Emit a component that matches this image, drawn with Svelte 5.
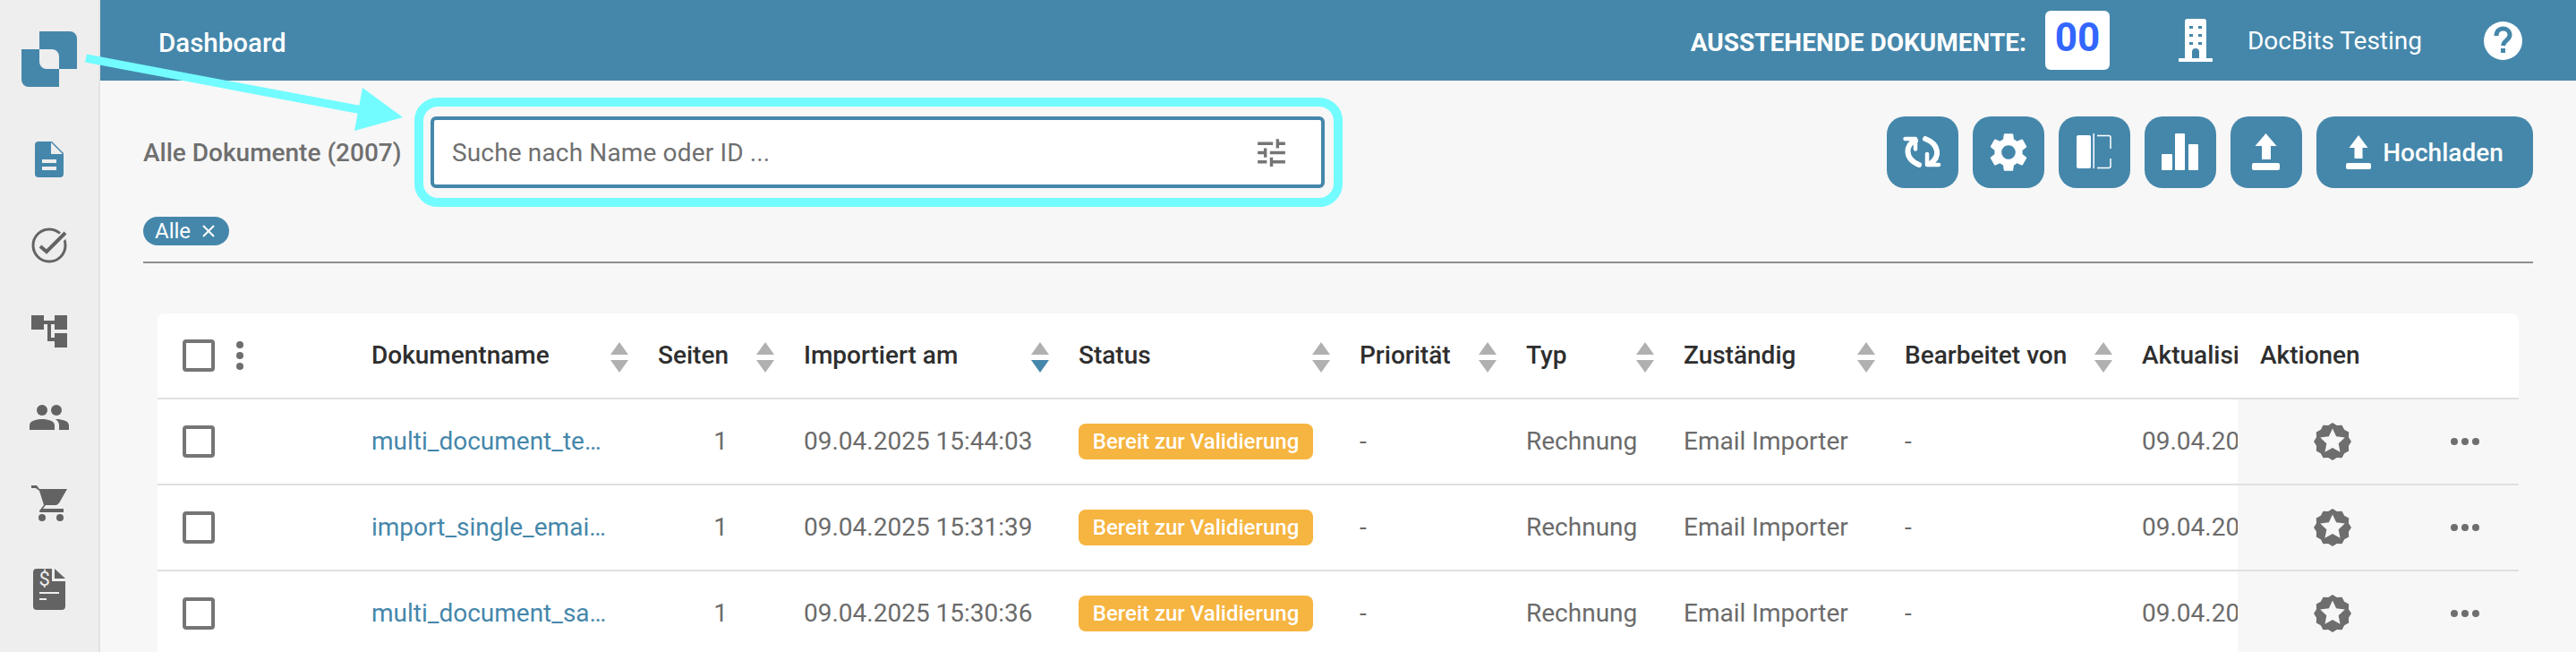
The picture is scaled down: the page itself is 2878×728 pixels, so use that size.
<script>
  const rows = [
    { name: 'multi_document_te…', date: '09.04.2025 15:44:03' },
    { name: 'import_single_emai…', date: '09.04.2025 15:31:39' },
    { name: 'multi_document_sa…', date: '09.04.2025 15:30:36' }
  ];

  const columns = [
    { label: 'Dokumentname' },
    { label: 'Seiten' },
    { label: 'Importiert am', active: true },
    { label: 'Status' },
    { label: 'Priorität' },
    { label: 'Typ' },
    { label: 'Zuständig' },
    { label: 'Bearbeitet von' }
  ];

  // scalloped badge with a star cut out of it
  function badgePath() {
    let d = '';
    for (let i = 0; i < 24; i++) {
      const r = i % 2 ? 18.6 : 21;
      const a = (i * Math.PI) / 12 - Math.PI / 2;
      d += `${i ? 'L' : 'M'}${(21 + r * Math.cos(a)).toFixed(2)} ${(21 + r * Math.sin(a)).toFixed(2)}`;
    }
    d += 'Z';
    for (let i = 0; i < 10; i++) {
      const r = i % 2 ? 7 : 14.5;
      const a = (i * Math.PI) / 5 - Math.PI / 2;
      d += `${i ? 'L' : 'M'}${(21 + r * Math.cos(a)).toFixed(2)} ${(21 + r * Math.sin(a)).toFixed(2)}`;
    }
    return d + 'Z';
  }
  const badge = badgePath();
</script>

<div class="page">
  <aside class="sidebar">
    <div class="logo">
      <svg width="62" height="62" viewBox="0 0 62 62">
        <path class="blue" d="M20 0H54a8 8 0 0 1 8 8V42H42V28a8 8 0 0 0-8-8H20Z" />
        <path class="blue" d="M0 20H20V34a8 8 0 0 0 8 8H42V62H8a8 8 0 0 1-8-8Z" />
      </svg>
    </div>
    <div class="nav-item">
      <svg width="32" height="40" viewBox="0 0 32 40">
        <path class="blue" d="M4 0H19L32 13V36a4 4 0 0 1-4 4H4a4 4 0 0 1-4-4V4a4 4 0 0 1 4-4Z" />
        <path class="cut" d="M18 1V14H31ZM8 20H24V24H8ZM8 28H24V32H8Z" />
      </svg>
    </div>
    <div class="nav-item">
      <svg width="40" height="40" viewBox="0 0 40 40" fill="none">
        <circle cx="20" cy="20" r="18" stroke="#636363" stroke-width="3" />
        <path d="M11 21L17 27L39 6" stroke="#eeeeee" stroke-width="9" />
        <path d="M10 21L17 27L38 6" stroke="#636363" stroke-width="4" />
      </svg>
    </div>
    <div class="nav-item">
      <svg width="40" height="36" viewBox="0 0 40 36">
        <path class="grey" d="M0 0H14V16H0ZM26 0H40V16H26ZM26 20H40V36H26Z" />
        <path class="grey" d="M14 6H26V10H22V25H26V29H18V10H14Z" />
      </svg>
    </div>
    <div class="nav-item">
      <svg width="44" height="28" viewBox="0 0 44 28">
        <circle class="grey" cx="14" cy="6" r="6" />
        <circle class="grey" cx="30" cy="6" r="6" />
        <path class="grey" d="M0 28V23C0 18 7 16 14 16S28 18 28 23V28Z" />
        <path class="grey" d="M29 16C37 16 44 18 44 23V28H33V22C33 20 31 17.500 29 16Z" />
      </svg>
    </div>
    <div class="nav-item">
      <svg width="40" height="40" viewBox="0 0 40 40">
        <path class="grey" d="M0 0H6L9 4H40L32 18C31 20 29 22 27 22H14L9 6L5 3H0Z" />
        <path class="grey" d="M14 22L10 27C8 29 9 30 11 30H36V26H13L16 22Z" />
        <circle class="grey" cx="12" cy="36" r="4" />
        <circle class="grey" cx="32" cy="36" r="4" />
      </svg>
    </div>
    <div class="nav-item">
      <svg width="36" height="46" viewBox="0 0 36 46">
        <path class="grey" d="M4 0H21V14H36V42a4 4 0 0 1-4 4H4a4 4 0 0 1-4-4V4a4 4 0 0 1 4-4ZM24 0L36 11H24Z" />
        <path class="cut" d="M7 26H29V28H7ZM7 33H15V35H7Z" />
        <text class="dollar" x="6.500" y="19">$</text>
      </svg>
    </div>
  </aside>

  <main class="main">
    <header class="topbar">
      <span class="title">Dashboard</span>
      <span class="pending">AUSSTEHENDE DOKUMENTE:</span>
      <span class="count">00</span>
      <svg class="building" width="38" height="48" viewBox="0 0 38 48">
        <path class="white" fill-rule="evenodd" d="M7 3a3 3 0 0 1 3-3H28a3 3 0 0 1 3 3V44H37a1.500 1.500 0 0 1 0 4H1a1.500 1.500 0 0 1 0-4H7ZM12 8H16V11H12ZM22 8H26V11H22ZM12 17H16V20H12ZM22 17H26V20H22ZM12 26H16V29H12ZM22 26H26V29H22ZM15 44H23V37a4 4 0 0 0-8 0Z" />
      </svg>
      <span class="company">DocBits Testing</span>
      <svg class="help" width="43" height="43" viewBox="0 0 43 43">
        <circle class="white" cx="21.500" cy="21.500" r="21.500" />
        <path d="M14 16C14 5 29 6 29 15C29 21 22 21 21.500 27" fill="none" stroke="#4587ab" stroke-width="5" />
        <rect x="19" y="30" width="5" height="5" fill="#4587ab" />
      </svg>
    </header>

    <div class="content">
      <div class="toolbar">
        <span class="doc-count">Alle Dokumente (2007)</span>
        <div class="search">
          <span class="placeholder">Suche nach Name oder ID ...</span>
          <svg width="41" height="41" viewBox="0 0 24 24">
            <path fill="#757575" d="M3 17v2h6v-2H3zM3 5v2h10V5H3zm10 16v-2h8v-2h-8v-2h-2v6h2zM7 9v2H3v2h4v2h2V9H7zm14 4v-2H11v2h10zm-6-4h2V7h4V5h-4V3h-2v6z" />
          </svg>
        </div>

        <div class="actions">
          <button class="icon-btn" aria-label="Aktualisieren">
            <svg width="80" height="80" viewBox="0 0 80 80" fill="none" stroke="#fff" stroke-linecap="round" stroke-linejoin="round">
              <path d="M32 27C21 31 19 47 36 54" stroke-width="6" />
              <path d="M20.500 25H32V36.500" stroke-width="4.500" />
              <path d="M43 25C59 31 60 46 48 53" stroke-width="6" />
              <path d="M45 42V54H58" stroke-width="4.500" />
            </svg>
          </button>
          <button class="icon-btn" aria-label="Einstellungen">
            <svg width="52" height="52" viewBox="0 0 24 24">
              <path class="white" d="M19.14 12.94c.04-.3.06-.61.06-.94 0-.32-.02-.64-.07-.94l2.03-1.58c.18-.14.23-.41.12-.61l-1.92-3.32c-.12-.22-.37-.29-.59-.22l-2.39.96c-.5-.38-1.03-.7-1.62-.94l-.36-2.54c-.04-.24-.24-.41-.48-.41h-3.84c-.24 0-.43.17-.47.41l-.36 2.54c-.59.24-1.13.57-1.62.94l-2.39-.96c-.22-.08-.47 0-.59.22L2.74 8.87c-.12.21-.08.47.12.61l2.03 1.58c-.05.3-.09.63-.09.94s.02.64.07.94l-2.03 1.58c-.18.14-.23.41-.12.61l1.92 3.32c.12.22.37.29.59.22l2.39-.96c.5.38 1.03.7 1.62.94l.36 2.54c.05.24.24.41.48.41h3.84c.24 0 .44-.17.47-.41l.36-2.54c.59-.24 1.13-.56 1.62-.94l2.39.96c.22.08.47 0 .59-.22l1.92-3.32c.12-.22.07-.47-.12-.61l-2.01-1.58zM12 15.6c-1.98 0-3.6-1.62-3.6-3.6s1.62-3.6 3.6-3.6 3.6 1.62 3.6 3.6-1.62 3.6-3.6 3.6z" />
            </svg>
          </button>
          <button class="icon-btn" aria-label="Spalten">
            <svg width="80" height="80" viewBox="0 0 80 80">
              <rect class="white" x="20" y="21" width="16" height="37" rx="2" />
              <rect class="white" x="38.500" y="19" width="1.500" height="39" />
              <path d="M43 21.500H56a2 2 0 0 1 2 2V36M58 47V55.500a2 2 0 0 1-2 2H43" fill="none" stroke="#fff" stroke-width="1.500" />
            </svg>
          </button>
          <button class="icon-btn" aria-label="Statistik">
            <svg width="80" height="80" viewBox="0 0 80 80">
              <rect class="white" x="19" y="42" width="12" height="18" rx="1" />
              <rect class="white" x="34" y="19" width="11" height="41" rx="1" />
              <rect class="white" x="49" y="31" width="11" height="29" rx="1" />
            </svg>
          </button>
          <button class="icon-btn" aria-label="Export">
            <svg width="80" height="80" viewBox="0 0 80 80">
              <path class="white" d="M39.500 19L51.500 33H45V48H35V33H27.500Z" />
              <rect class="white" x="24" y="52" width="31" height="8" rx="2" />
            </svg>
          </button>
          <button class="upload-btn">
            <svg width="28" height="38" viewBox="0 0 28 38">
              <path class="white" d="M14 0L24.500 14H18.500V26H9.500V14H3.500Z" />
              <rect class="white" x="0" y="31" width="28" height="7" rx="2" />
            </svg>
            Hochladen
          </button>
        </div>
      </div>

      <div class="filters">
        <span class="chip">
          Alle
          <svg width="14" height="14" viewBox="0 0 14 14" fill="none" stroke="#fff" stroke-width="2">
            <path d="M1 1L13 13M13 1L1 13" />
          </svg>
        </span>
      </div>

      <div class="table">
        <div class="row head">
          <div class="cell select">
            <span class="checkbox"></span>
            <span class="kebab"><i></i><i></i><i></i></span>
          </div>
          {#each columns as col}
            <div class="cell sortable">
              <span>{col.label}</span>
              <span class="sort">
                <i class="up"></i>
                <i class="down" class:active={col.active}></i>
              </span>
            </div>
          {/each}
          <div class="cell clipped">Aktualisiert am</div>
          <div class="cell action-head">Aktionen</div>
        </div>

        {#each rows as row}
          <div class="row">
            <div class="cell select"><span class="checkbox"></span></div>
            <div class="cell link">{row.name}</div>
            <div class="cell pages">1</div>
            <div class="cell">{row.date}</div>
            <div class="cell status-cell"><span class="status">Bereit zur Validierung</span></div>
            <div class="cell">-</div>
            <div class="cell">Rechnung</div>
            <div class="cell">Email Importer</div>
            <div class="cell">-</div>
            <div class="cell clipped">{row.date}</div>
            <div class="cell action-cell">
              <svg width="42" height="42" viewBox="0 0 42 42">
                <path fill="#6e6e6e" fill-rule="evenodd" d={badge} />
              </svg>
              <span class="more"><i></i><i></i><i></i></span>
            </div>
          </div>
        {/each}
      </div>
    </div>
  </main>

  <!-- annotation drawn on top of the screenshot -->
  <svg class="arrow" width="520" height="160" viewBox="0 0 520 160">
    <path d="M97 60.500L95 69.500L401 127L403 118Z" fill="#72fcff" />
    <path d="M405 98L450 131L396 146Z" fill="#72fcff" />
  </svg>
</div>

<style>
  :global(body) {
    margin: 0;
    overflow: hidden;
    font-family: Roboto, "Liberation Sans", sans-serif;
  }

  .page {
    position: relative;
    display: flex;
    width: 2878px;
    height: 728px;
    overflow: hidden;
    background: #f7f7f7;
  }

  .blue { fill: #4587ab; }
  .grey { fill: #636363; }
  .white { fill: #fff; }
  .cut { fill: #eeeeee; }

  .dollar {
    font-family: Roboto, sans-serif;
    font-size: 22px;
    fill: #eeeeee;
  }

  .sidebar {
    flex: none;
    width: 110px;
    border-right: 2px solid #e3e3e3;
    background: #eeeeee;
    display: flex;
    flex-direction: column;
    align-items: center;
  }

  .logo {
    height: 130px;
    display: flex;
    align-items: center;
    padding-top: 2px;
    box-sizing: border-box;
  }

  .nav-item {
    flex: none;
    height: 96px;
    display: flex;
    align-items: center;
    justify-content: center;
  }

  .main {
    flex: 1;
    min-width: 0;
  }

  .topbar {
    height: 90px;
    background: #4587ab;
    color: #fff;
    display: flex;
    align-items: center;
    padding: 0 60px 0 65px;
  }

  .title {
    font-size: 29.500px;
    font-weight: 500;
    margin-right: auto;
    padding-top: 5px;
  }

  .pending {
    font-size: 28px;
    font-weight: 700;
    margin-right: 21px;
    padding-top: 5px;
  }

  .count {
    width: 72px;
    height: 66px;
    box-sizing: border-box;
    padding-bottom: 6px;
    background: #fff;
    border-radius: 6px;
    color: #3366ff;
    font-size: 44px;
    font-weight: 700;
    display: flex;
    align-items: center;
    justify-content: center;
    margin-right: 77px;
  }

  .company {
    font-size: 28px;
    margin: 0 69px 0 39px;
  }

  .content {
    padding: 40px 48px 0;
  }

  .toolbar {
    display: flex;
    align-items: center;
    height: 80px;
  }

  .doc-count {
    width: 321px;
    font-size: 28px;
    font-weight: 500;
    color: #6f6f6f;
  }

  .search {
    position: relative;
    width: 999px;
    height: 80px;
    box-sizing: border-box;
    border: 4px solid #4587ab;
    border-radius: 6px;
    background: #fff;
    display: flex;
    align-items: center;
    justify-content: space-between;
    padding: 0 35px 0 20px;
  }

  /* cyan highlight around the search box */
  .search::after {
    content: "";
    position: absolute;
    inset: -25px -24px -25px -22px;
    border: 10px solid #72fcff;
    border-radius: 26px;
  }

  .placeholder {
    font-size: 28px;
    letter-spacing: 0.15px;
    color: #6f6f6f;
  }

  .actions {
    margin-left: auto;
    display: flex;
    gap: 16px;
  }

  .icon-btn,
  .upload-btn {
    height: 80px;
    border: none;
    border-radius: 20px;
    background: #4587ab;
    padding: 0;
    display: flex;
    align-items: center;
    justify-content: center;
  }

  .icon-btn {
    width: 80px;
  }

  .upload-btn {
    width: 242px;
    gap: 13px;
    color: #fff;
    font-family: inherit;
    font-size: 28px;
    font-weight: 500;
  }

  .filters {
    margin-top: 32px;
    padding-bottom: 18px;
    border-bottom: 2px solid #8f8f8f;
    display: flex;
  }

  .chip {
    height: 32px;
    box-sizing: border-box;
    width: 96px;
    padding-left: 13px;
    border-radius: 16px;
    background: #4587ab;
    color: #fff;
    font-size: 24px;
    display: flex;
    align-items: center;
    gap: 13px;
  }

  .table {
    margin: 56px 0 0 16px;
    width: 2638px;
    background: #fff;
    border-radius: 8px 8px 0 0;
  }

  .row {
    display: grid;
    grid-template-columns: 239px 320px 163px 307px 314px 186px 176px 247px 265px 107px 314px;
    height: 96px;
    box-sizing: border-box;
    border-bottom: 2px solid #e0e0e0;
    font-size: 28px;
    color: #6b6b6b;
  }

  .head {
    color: #2e2e2e;
    font-weight: 500;
  }

  .cell {
    display: flex;
    align-items: center;
    white-space: nowrap;
    min-width: 0;
    padding-bottom: 2px;
  }

  .select {
    padding: 0 0 0 28px;
    gap: 24px;
  }

  .checkbox {
    width: 36px;
    height: 36px;
    box-sizing: border-box;
    border: 4px solid #757575;
    border-radius: 4px;
  }

  .kebab {
    display: flex;
    flex-direction: column;
    gap: 4px;
  }

  .kebab i,
  .more i {
    width: 8px;
    height: 8px;
    border-radius: 50%;
    background: #6e6e6e;
  }

  .sortable {
    justify-content: space-between;
    padding-right: 33px;
  }

  .sort {
    display: flex;
    flex-direction: column;
    gap: 6px;
    margin-top: 6px;
  }

  .sort i {
    width: 0;
    height: 0;
    border-left: 10px solid transparent;
    border-right: 10px solid transparent;
  }

  .sort .up {
    border-bottom: 14px solid #b0b0b0;
  }

  .sort .down {
    border-top: 14px solid #b0b0b0;
  }

  .sort .down.active {
    border-top-color: #4587ab;
  }

  .link {
    color: #4587ab;
  }

  .pages {
    justify-content: flex-end;
    padding-right: 85px;
  }

  .status-cell {
    padding-bottom: 0;
  }

  .status {
    width: 262px;
    height: 40px;
    border-radius: 8px;
    background: #f6b440;
    color: #fff;
    font-size: 24px;
    font-weight: 500;
    display: flex;
    align-items: center;
    justify-content: center;
  }

  .clipped {
    overflow: hidden;
  }

  .action-head {
    padding-left: 25px;
  }

  .action-cell {
    background: #f7f7f7;
    padding: 0 0 0 85px;
    gap: 111px;
  }

  .more {
    display: flex;
    gap: 4px;
  }

  .arrow {
    position: absolute;
    top: 0;
    left: 0;
    pointer-events: none;
  }
</style>
